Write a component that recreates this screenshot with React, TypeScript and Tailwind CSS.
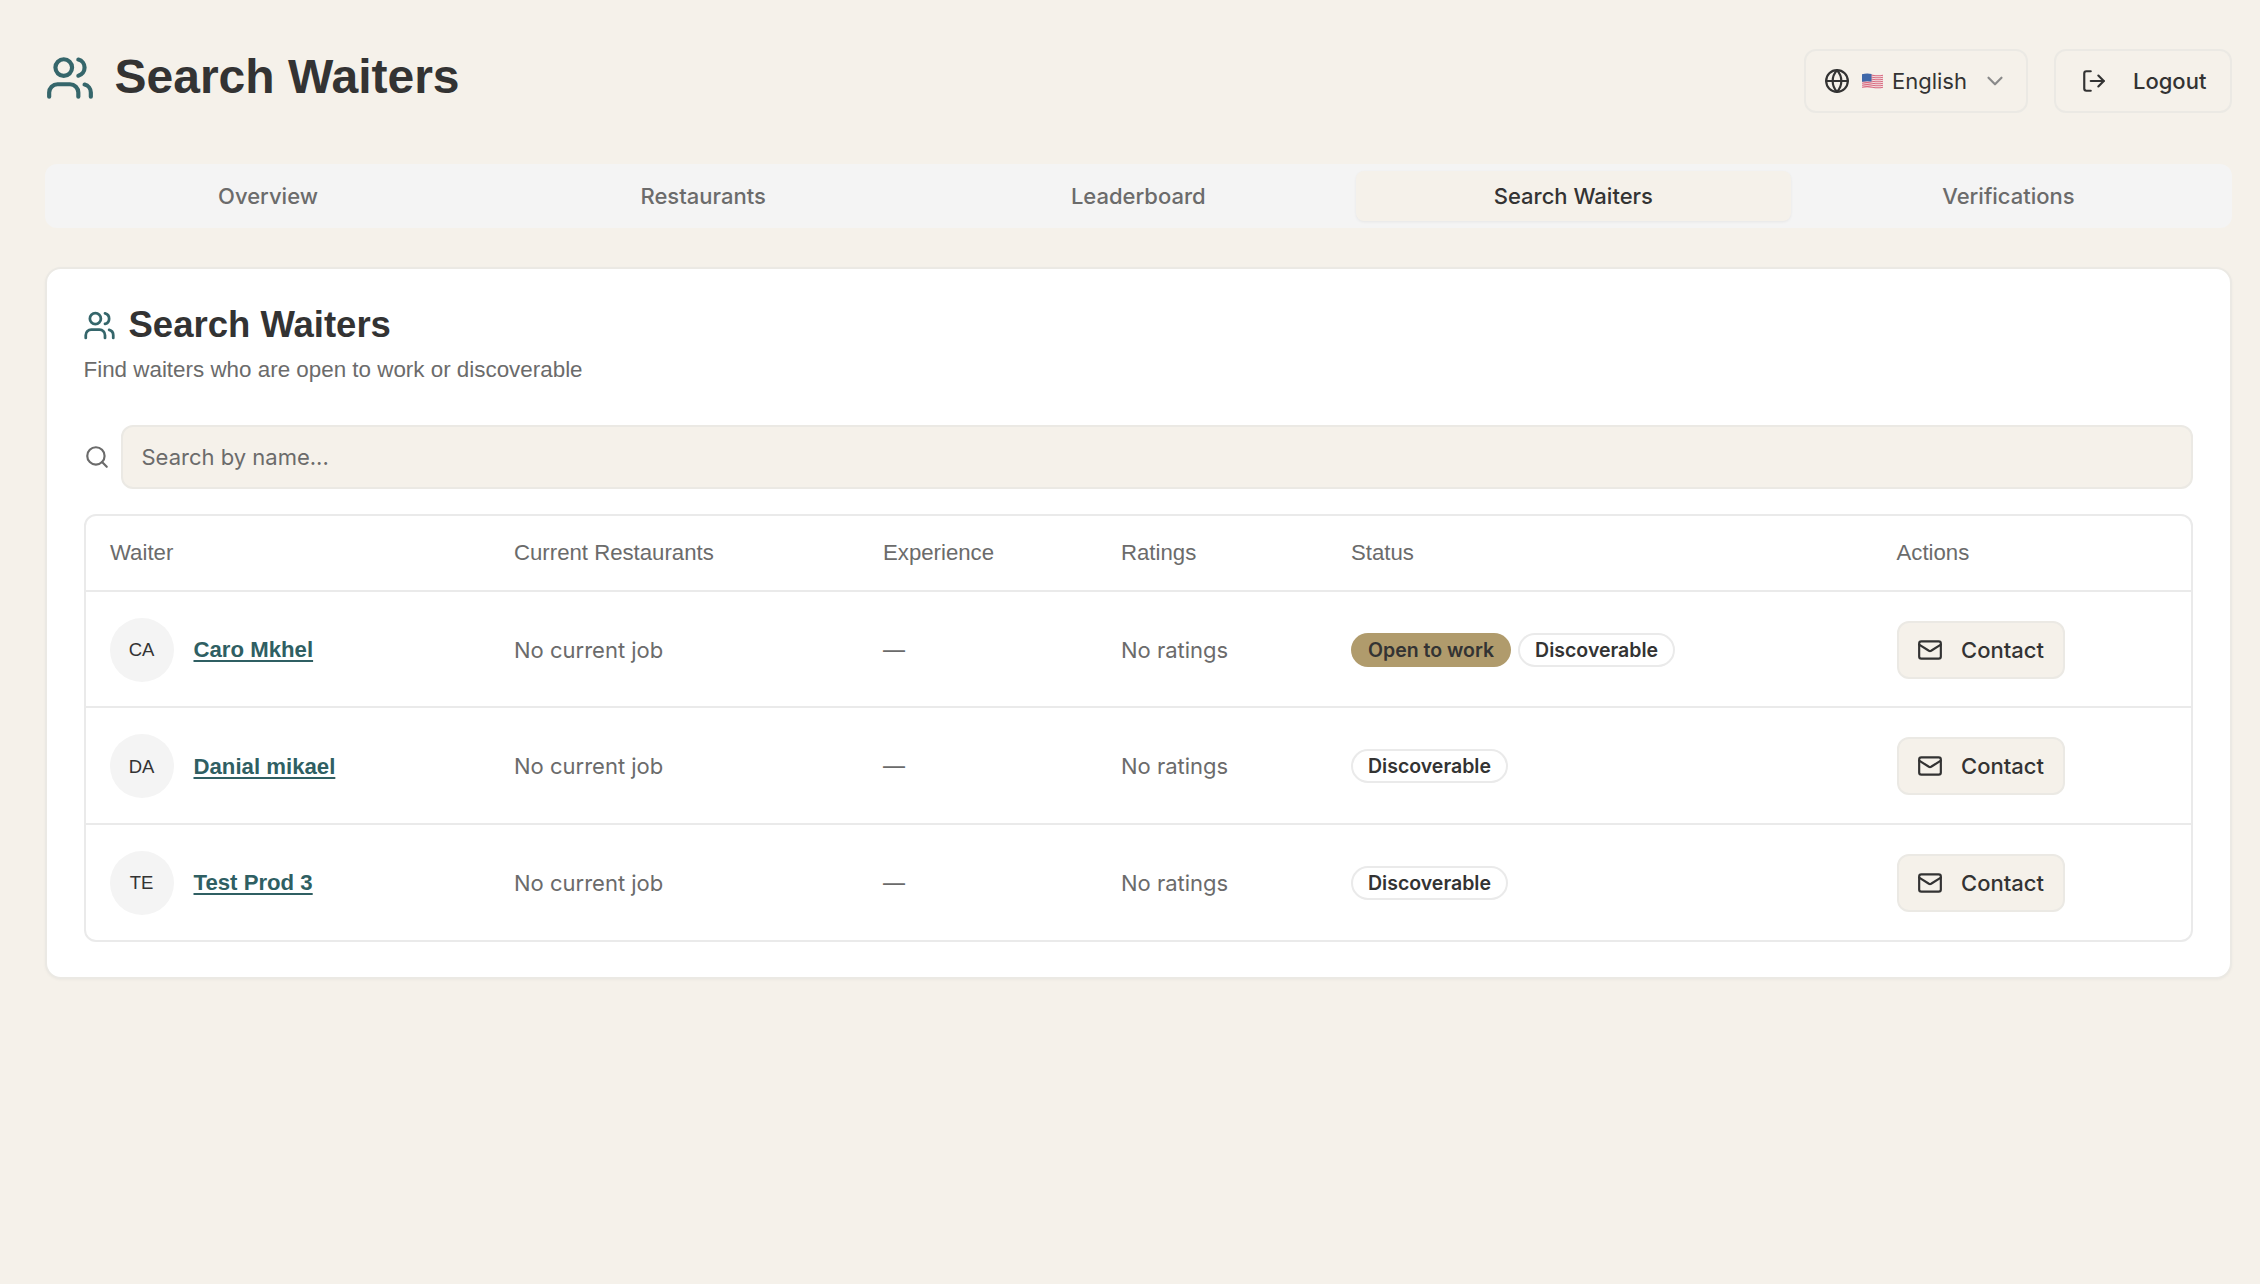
import { ChevronDown, Globe, LogOut, Mail, Search, Users } from 'lucide-react';

const tabs = ['Overview', 'Restaurants', 'Leaderboard', 'Search Waiters', 'Verifications'];

const waiters = [
    { initials: 'CA', name: 'Caro Mkhel', openToWork: true },
    { initials: 'DA', name: 'Danial mikael', openToWork: false },
    { initials: 'TE', name: 'Test Prod 3', openToWork: false }
];

const sans = "font-['Liberation_Sans',Arial,sans-serif]";
const inter = "font-['Inter',sans-serif]";

function FlagUS() {
    const stripes = [2.2, 4.2, 6.2, 8.2, 10.2, 12.2, 14.2];
    return (
        <svg width="21" height="17" viewBox="0 0 21 17" className="shrink-0">
            <path d="M0 1.2q5 -1.2 10.5 0t10.5 0v14q-5 1.2 -10.5 0t-10.5 0z" fill="#f4e9ea" />
            {stripes.map((y) => (
                <path key={y} d={`M0 ${y}q5 -1.2 10.5 0t10.5 0`} fill="none" stroke="#d8677c" strokeWidth="1.1" />
            ))}
            <path d="M0 1.2q5 -1.2 9.5 -0.2v7.6q-5 -0.8 -9.5 0.2z" fill="#3f68a9" />
        </svg>
    );
}

function WaiterRow({ initials, name, openToWork }: { initials: string; name: string; openToWork: boolean }) {
    return (
        <tr className="h-[116.25px] border-t-2 border-[#eaeaea]">
            <td className="pt-[2px] pl-[24px]">
                <div className="flex items-center gap-[20px]">
                    <div className={`flex h-16 w-16 items-center justify-center rounded-full bg-[#f4f4f4] text-[18.5px] text-[#333333] ${sans}`}>
                        {initials}
                    </div>
                    <a className={`text-[22.2px] font-bold text-[#2f5f63] underline decoration-2 underline-offset-[3px] ${sans}`}>
                        {name}
                    </a>
                </div>
            </td>
            <td className={`pt-[2px] pl-[24.5px] text-[22px] text-[#6b6b6b] ${inter}`}>No current job</td>
            <td className={`pt-[2px] pl-[24.5px] text-[22px] text-[#6b6b6b] ${inter}`}>—</td>
            <td className={`pt-[2px] pl-[24.5px] text-[22px] text-[#6b6b6b] ${inter}`}>No ratings</td>
            <td className="pt-[2px] pl-[24.5px]">
                <div className={`flex items-center gap-[7px] text-[19.5px] font-semibold text-[#333333] ${inter}`}>
                    {openToWork && (
                        <span className="flex h-[34px] items-center rounded-full bg-[#b09b6c] px-[17px]">Open to work</span>
                    )}
                    <span className="flex h-[34px] items-center rounded-full border-2 border-[#eaeaea] bg-white px-[15px]">Discoverable</span>
                </div>
            </td>
            <td className="pt-[2px] pl-[25.5px]">
                <button className={`flex h-[58px] w-[168px] items-center gap-[18px] rounded-xl border-2 border-[#ebe9e4] bg-[#f5f1ea] pl-[18px] text-[22px] font-medium text-[#333333] ${inter}`}>
                    <Mail className="h-[26px] w-[26px]" />
                    Contact
                </button>
            </td>
        </tr>
    );
}

export default function App() {
    return (
        <div className="min-h-[1284px] bg-[#f5f1ea] pt-[49px] pr-[28px] pl-[44.5px]">
            <header className="flex h-16 items-center justify-between">
                <div className="flex items-center gap-[20px]">
                    <Users className="h-[50px] w-[50px] -translate-y-[3px] text-[#35666b]" strokeWidth={2} />
                    <h1 className={`-translate-y-[4px] text-[48px] font-bold text-[#333333] ${sans}`}>Search Waiters</h1>
                </div>
                <div className={`flex items-center gap-[26px] text-[22px] font-medium text-[#333333] ${inter}`}>
                    <button className="flex h-16 w-[224px] items-center rounded-xl border-2 border-[#ebe9e4] pl-[18px]">
                        <Globe className="h-[26px] w-[26px]" strokeWidth={2} />
                        <span className="ml-[12px]"><FlagUS /></span>
                        <span className="ml-[9px] font-normal">English</span>
                        <ChevronDown className="ml-[15px] h-[26px] w-[26px] text-[#8a8a8a]" />
                    </button>
                    <button className="flex h-16 w-[178px] items-center rounded-xl border-2 border-[#ebe9e4] pl-[25px]">
                        <LogOut className="h-[26px] w-[26px]" />
                        <span className="ml-[26px]">Logout</span>
                    </button>
                </div>
            </header>

            <nav className={`mt-[51px] grid h-[64px] grid-cols-5 rounded-xl bg-[#f4f4f4] px-1.5 py-[7px] text-[22px] font-medium text-[#6b6b6b] ${inter}`}>
                {tabs.map((tab) => (
                    <div
                        key={tab}
                        className={`flex items-center justify-center rounded-lg ${tab === 'Search Waiters' ? 'bg-[#f5f1ea] text-[#333333] shadow-[0_1px_3px_rgba(0,0,0,0.06)]' : ''}`}
                    >
                        {tab}
                    </div>
                ))}
            </nav>

            <section className="mt-[39px] h-[712px] rounded-2xl border-2 border-[#ebe9e4] bg-white px-[37px] pt-[33px] shadow-[0_1px_3px_rgba(0,0,0,0.04)]">
                <div className="flex items-center gap-[13px]">
                    <Users className="-ml-px h-[33px] w-[33px] text-[#35666b]" strokeWidth={2} />
                    <h2 className={`text-[36.5px] leading-[46px] font-bold text-[#333333] ${sans}`}>Search Waiters</h2>
                </div>
                <p className={`mt-[6px] text-[22.4px] leading-8 text-[#6b6b6b] ${sans}`}>Find waiters who are open to work or discoverable</p>

                <div className="mt-[39px] flex items-center gap-[11px]">
                    <Search className="h-[26px] w-[26px] shrink-0 text-[#6b6b6b]" />
                    <div className={`flex h-[64px] flex-1 items-center rounded-xl border-2 border-[#ebe9e4] bg-[#f5f1ea] px-[19px] text-[22px] text-[#6b6b6b] ${inter}`}>
                        Search by name...
                    </div>
                </div>

                <div className="mt-[25px] overflow-hidden rounded-xl border-2 border-[#eaeaea]">
                    <table className="w-full table-fixed border-collapse text-left">
                        <colgroup>
                            <col className="w-[404px]" />
                            <col className="w-[369px]" />
                            <col className="w-[238px]" />
                            <col className="w-[230px]" />
                            <col className="w-[545px]" />
                            <col />
                        </colgroup>
                        <thead>
                            <tr className={`h-[75px] text-[22.2px] text-[#6b6b6b] ${sans}`}>
                                <th className="pl-[24.5px] font-normal">Waiter</th>
                                <th className="pl-[24.5px] font-normal">Current Restaurants</th>
                                <th className="pl-[24.5px] font-normal">Experience</th>
                                <th className="pl-[24.5px] font-normal">Ratings</th>
                                <th className="pl-[24.5px] font-normal">Status</th>
                                <th className="pl-[25px] font-normal">Actions</th>
                            </tr>
                        </thead>
                        <tbody>
                            {waiters.map((waiter) => (
                                <WaiterRow key={waiter.initials} {...waiter} />
                            ))}
                        </tbody>
                    </table>
                </div>
            </section>
        </div>
    );
}
